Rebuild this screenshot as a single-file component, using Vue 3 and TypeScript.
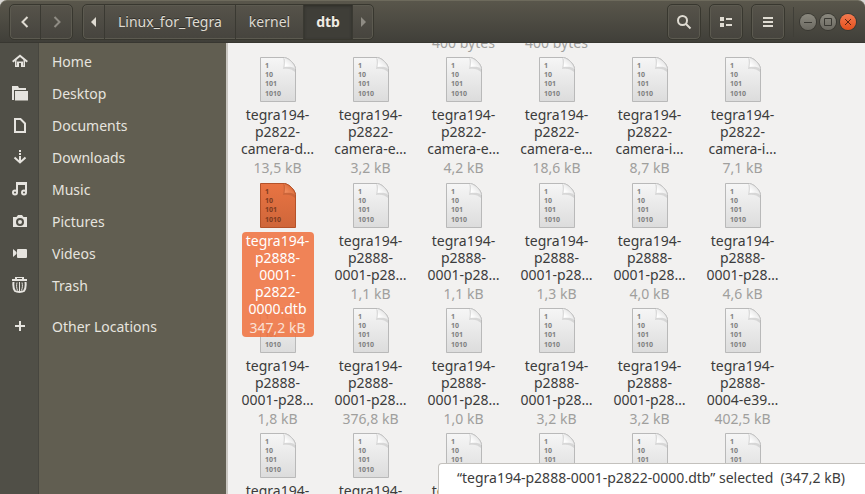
<script setup lang="ts">
interface FileEntry {
  lines: string[]
  size: string
  selected?: boolean
}

interface Place {
  id: string
  label: string
}

const places: Place[] = [
  { id: 'home', label: 'Home' },
  { id: 'desktop', label: 'Desktop' },
  { id: 'documents', label: 'Documents' },
  { id: 'downloads', label: 'Downloads' },
  { id: 'music', label: 'Music' },
  { id: 'pictures', label: 'Pictures' },
  { id: 'videos', label: 'Videos' },
  { id: 'trash', label: 'Trash' },
  { id: 'other', label: 'Other Locations' },
]

const file = (second: string, third: string, size: string): FileEntry => ({
  lines: ['tegra194-', second, third],
  size,
})

// Captions of the row that is scrolled almost out of view.
const scrolledSizes = ['', '', '400 bytes', '400 bytes', '', '']

const files: FileEntry[] = [
  file('p2822-', 'camera-d…', '13,5 kB'),
  file('p2822-', 'camera-e…', '3,2 kB'),
  file('p2822-', 'camera-e…', '4,2 kB'),
  file('p2822-', 'camera-e…', '18,6 kB'),
  file('p2822-', 'camera-i…', '8,7 kB'),
  file('p2822-', 'camera-i…', '7,1 kB'),
  {
    lines: ['tegra194-', 'p2888-', '0001-', 'p2822-', '0000.dtb'],
    size: '347,2 kB',
    selected: true,
  },
  file('p2888-', '0001-p28…', '1,1 kB'),
  file('p2888-', '0001-p28…', '1,1 kB'),
  file('p2888-', '0001-p28…', '1,3 kB'),
  file('p2888-', '0001-p28…', '4,0 kB'),
  file('p2888-', '0001-p28…', '4,6 kB'),
  file('p2888-', '0001-p28…', '1,8 kB'),
  file('p2888-', '0001-p28…', '376,8 kB'),
  file('p2888-', '0001-p28…', '1,0 kB'),
  file('p2888-', '0001-p28…', '3,2 kB'),
  file('p2888-', '0001-p28…', '3,2 kB'),
  file('p2888-', '0004-e39…', '402,5 kB'),
  ...Array.from({ length: 6 }, () => ({ lines: ['tegra194-'], size: '' })),
]
</script>

<template>
  <div class="window">
    <header class="titlebar">
      <div class="group nav">
        <button type="button" class="back" aria-label="Back">
          <svg width="16" height="16" viewBox="0 0 16 16"><path d="M10.5 3 5.500 8l5 5" class="chevron" /></svg>
        </button>
        <button type="button" class="forward" aria-label="Forward" disabled>
          <svg width="16" height="16" viewBox="0 0 16 16"><path d="m5.500 3 5 5-5 5" class="chevron" /></svg>
        </button>
      </div>
      <nav class="group path" aria-label="Path">
        <button type="button" class="edge" aria-label="Scroll path left">
          <svg width="16" height="16" viewBox="0 0 16 16"><path d="M10 3v10L5 8z" /></svg>
        </button>
        <button type="button" class="crumb">Linux_for_Tegra</button>
        <button type="button" class="crumb">kernel</button>
        <button type="button" class="crumb current" aria-current="page">dtb</button>
        <button type="button" class="edge" aria-label="Scroll path right" disabled>
          <svg width="16" height="16" viewBox="0 0 16 16"><path d="M6 3v10L11 8z" /></svg>
        </button>
      </nav>
      <div class="tools">
        <button type="button" class="tool" aria-label="Search">
          <svg width="16" height="16" viewBox="0 0 16 16">
            <circle cx="6.500" cy="6.500" r="4.500" class="lens" />
            <path d="m10 10 4.500 4.500" class="handle" />
          </svg>
        </button>
        <button type="button" class="tool" aria-label="List view">
          <svg width="16" height="16" viewBox="0 0 16 16">
            <path d="M2 3h4v4H2zM8 4h6v2H8zM2 9h4v4H2zM8 10h6v2H8z" />
          </svg>
        </button>
        <button type="button" class="tool" aria-label="Menu">
          <svg width="16" height="16" viewBox="0 0 16 16">
            <path d="M3 3h10v2H3zM3 7h10v2H3zM3 11h10v2H3z" />
          </svg>
        </button>
      </div>
      <div class="controls">
        <button type="button" aria-label="Minimize">
          <svg width="16" height="16" viewBox="0 0 16 16"><path d="M4 8.500h8" /></svg>
        </button>
        <button type="button" aria-label="Maximize">
          <svg width="16" height="16" viewBox="0 0 16 16"><path d="M4.500 4.500h7v7h-7z" /></svg>
        </button>
        <button type="button" class="close" aria-label="Close">
          <svg width="16" height="16" viewBox="0 0 16 16"><path d="m5 5 6 6m0-6-6 6" /></svg>
        </button>
      </div>
    </header>

    <div class="body">
      <aside class="sidebar">
        <ul>
          <li v-for="place in places" :key="place.id" :class="{ separated: place.id === 'other' }">
            <a href="#">
              <span class="place-icon">
                <svg width="16" height="16" viewBox="0 0 16 16" aria-hidden="true">
                  <g v-if="place.id === 'home'">
                    <path d="m.7 8.700 7.300-6 7.300 6" class="line" />
                    <path d="M3 7.500V14h4v-4h2v4h4V7.500L11.500 6v6.500H11V8.500H5v4h-.5V6z" />
                  </g>
                  <g v-else-if="place.id === 'desktop'">
                    <path d="M0 1h6l1 2h7v2H2v10H0z" />
                    <path d="M3 6h13v9.500H3z" />
                  </g>
                  <path v-else-if="place.id === 'documents'" d="M3 2h5.500L13 6.500V15H3z" class="line" />
                  <g v-else-if="place.id === 'downloads'">
                    <path d="M7 1h2v2H7zM7 4h2v2H7zM7 7h2v5H7z" />
                    <path d="m2.500 8.500 5.500 5 5.500-5" class="line" />
                  </g>
                  <g v-else-if="place.id === 'music'">
                    <circle cx="3" cy="11.500" r="2" class="line" />
                    <circle cx="12" cy="11.500" r="2" class="line" />
                    <path d="M5 11.500V2h9v9.500M5 3h9" class="line" />
                  </g>
                  <path
                    v-else-if="place.id === 'pictures'"
                    fill-rule="evenodd"
                    d="M1 4h3.500L6 2h4l1.500 2H15v10H1zM8 5a4 4 0 1 0 0 8 4 4 0 0 0 0-8zm0 2a2 2 0 1 1 0 4 2 2 0 0 1 0-4z"
                  />
                  <path
                    v-else-if="place.id === 'videos'"
                    d="M1 4v8l3.500-3V7zM6 4h8a1 1 0 0 1 1 1v7a1 1 0 0 1-1 1H6a1 1 0 0 1-1-1V5a1 1 0 0 1 1-1z"
                  />
                  <g v-else-if="place.id === 'trash'">
                    <path fill-rule="evenodd" d="M3 0h9v2h3v2H0V2h3zm2 1v1h5V1z" />
                    <path d="M1.500 5c-.5 4 0 7 1.500 9 2 1.300 7 1.300 9 0 1.500-2 2-5 1.500-9" class="line" />
                    <path d="M5 5.500c-.7 3-.5 5 .5 8M7.500 5v9M10 5.500c.7 3 .5 5-.5 8" class="thin" />
                  </g>
                  <path v-else d="M7 3h2v4h4v2H9v4H7V9H3V7h4z" />
                </svg>
              </span>
              <span class="place-label">{{ place.label }}</span>
            </a>
          </li>
        </ul>
      </aside>

      <main class="files">
        <div class="row scrolled">
          <span v-for="(size, i) in scrolledSizes" :key="i" class="size">{{ size }}</span>
        </div>
        <div class="row grid">
          <div v-for="(entry, i) in files" :key="i" class="file" :class="{ selected: entry.selected }">
            <svg class="doc" width="36" height="45" viewBox="0 0 36 45" aria-hidden="true">
              <defs>
                <linearGradient :id="'page' + i" x1="0" y1="0" x2="0" y2="1">
                  <stop offset="0" :stop-color="entry.selected ? '#e97443' : '#f6f6f6'" />
                  <stop offset="1" :stop-color="entry.selected ? '#cf663a' : '#dcdcdc'" />
                </linearGradient>
                <linearGradient :id="'fold' + i" x1="0" y1="1" x2="1" y2="0">
                  <stop offset="0.2" :stop-color="entry.selected ? '#f08a5c' : '#ffffff'" />
                  <stop offset="0.8" :stop-color="entry.selected ? '#d4622f' : '#dedede'" />
                </linearGradient>
              </defs>
              <path class="page" :fill="`url(#page${i})`" d="M.5.5h24c5 1 10 6 11 11v33H.5z" />
              <path class="shade" d="M23 1c1 3 1 6 0 11 5-1 9 0 12 3v-3C33 6 29 3 23 1z" />
              <path class="fold" :fill="`url(#fold${i})`" d="M24.500.5c1 3 .5 6 0 9.500 4-.5 8-.5 11 1.500-1-5-6-10-11-11z" />
              <path class="rim" d="M24.500.5c5 1 10 6 11 11" />
              <g class="digits">
                <text x="5" y="11">1</text>
                <text x="5" y="20">10</text>
                <text x="5" y="29">101</text>
                <text x="5" y="39">1010</text>
              </g>
            </svg>
            <div class="caption">
              <div class="name">
                <div v-for="(line, n) in entry.lines" :key="n">{{ line }}</div>
              </div>
              <div class="size">{{ entry.size }}</div>
            </div>
          </div>
        </div>
        <div class="status" role="status">“tegra194-p2888-0001-p2822-0000.dtb” selected&nbsp; (347,2 kB)</div>
      </main>
    </div>
  </div>
</template>

<style>
body {
  margin: 0;
  background: #d8d6d3;
}
</style>

<style scoped>
.window {
  display: flex;
  flex-direction: column;
  height: 100vh;
  overflow: hidden;
  font-family: "Noto Sans", "Open Sans", sans-serif;
  font-size: 14px;
  color: #3c3c3c;
}

button {
  margin: 0;
  padding: 0;
  border: 0;
  background: none;
  color: #dfdbd2;
  font: inherit;
  display: flex;
  align-items: center;
  justify-content: center;
}

svg {
  display: block;
  flex: none;
  fill: currentColor;
}

.titlebar {
  display: flex;
  align-items: center;
  box-sizing: border-box;
  height: 43px;
  flex: none;
  padding: 0 9px;
  border-top: 1px solid #6d6a5c;
  border-bottom: 1px solid #383731;
  border-radius: 7px 7px 0 0;
  background: linear-gradient(#59564b, #403f39);
}

.group,
.tool {
  box-sizing: border-box;
  height: 36px;
  border: 1px solid #38372f;
  border-radius: 5px;
  background: linear-gradient(#56534a, #46443e);
  box-shadow: inset 0 0 0 1px #5c5a50;
}

.group {
  display: flex;
  overflow: hidden;
}

.group button + button {
  border-left: 1px solid #3a3932;
}

.back {
  width: 30px;
}

.forward {
  width: 32px;
}

.nav {
  margin-right: 9px;
}

.chevron {
  fill: none;
  stroke: currentColor;
  stroke-width: 2;
}

button:disabled {
  color: #8f8c84;
}

.edge {
  width: 21px;
}

.crumb {
  padding: 0 13px;
  text-shadow: 0 -1px #2f2e29;
}

.current {
  padding: 0 12px;
  background: #3f3e38;
  box-shadow: inset 0 1px 3px #2d2c27;
  font-weight: 700;
  color: #f0ece4;
}

.tools {
  display: flex;
  gap: 8px;
  margin-left: auto;
}

.tool {
  width: 34px;
}

.lens,
.handle {
  fill: none;
  stroke: currentColor;
  stroke-width: 2;
}

.controls {
  display: flex;
  align-items: center;
  gap: 4px;
  height: 30px;
  margin-left: 8px;
  padding-left: 6px;
  border-left: 1px solid #403f38;
}

.controls button {
  width: 16px;
  height: 16px;
  border-radius: 50%;
  background: linear-gradient(#8b897f, #6c6a62);
  box-shadow: 0 0 0 1px #3a3933;
  color: #3a3933;
}

.controls .close {
  background: linear-gradient(#f47a50, #e3501d);
  color: #5b2410;
}

.controls path {
  fill: none;
  stroke: currentColor;
}

.body {
  display: flex;
  flex: 1;
  min-height: 0;
}

.sidebar {
  box-sizing: border-box;
  width: 228px;
  flex: none;
  border-right: 2px solid #c9c6c1;
  background: linear-gradient(to right, #504f47 38px, #47463f 38px, #47463f 39px, #615e51 39px);
}

.sidebar ul {
  margin: 0;
  padding: 2px 0;
  list-style: none;
}

.separated {
  margin-top: 9px;
}

.sidebar a {
  display: flex;
  align-items: center;
  height: 32px;
  color: #e6e4df;
  text-decoration: none;
}

.place-icon {
  width: 40px;
  display: flex;
  justify-content: center;
}

.place-label {
  padding-left: 12px;
}

.line {
  fill: none;
  stroke: currentColor;
  stroke-width: 2;
}

.thin {
  fill: none;
  stroke: currentColor;
}

.files {
  position: relative;
  flex: 1;
  min-width: 0;
  overflow: hidden;
  background: #f2f1f0;
}

.row {
  display: grid;
  grid-template-columns: repeat(auto-fill, 93px);
  padding-left: 3px;
}

.scrolled {
  height: 14px;
  align-content: end;
}

.scrolled .size {
  margin-bottom: 5px;
}

.grid {
  grid-template-rows: 126px;
  grid-auto-rows: 125px;
}

.file {
  display: flex;
  flex-direction: column;
  align-items: center;
}

.doc {
  overflow: visible;
}

.page {
  stroke: #b9b9b9;
}

.rim {
  fill: none;
  stroke: #c4c4c4;
}

.shade {
  fill: #000000;
  opacity: 0.1;
}

.digits {
  fill: #808080;
  font-family: "Noto Sans", sans-serif;
  font-size: 7px;
  font-weight: 700;
}

.caption {
  box-sizing: border-box;
  width: 72px;
  margin-top: 4px;
  display: flex;
  flex-direction: column;
  align-items: center;
  border-radius: 4px;
  white-space: nowrap;
}

.name {
  line-height: 17px;
  text-align: center;
}

.size {
  margin-top: 2px;
  line-height: 18px;
  text-align: center;
  color: #a09f9d;
}

.selected .caption {
  position: relative;
  background: rgba(240, 119, 70, 0.9);
  color: #ffffff;
}

.selected .size {
  color: #fbe0d5;
}

.selected .page,
.selected .rim {
  stroke: #b4522a;
}

.selected .digits {
  fill: #7d3a1f;
}

.status {
  position: absolute;
  right: 0;
  bottom: 0;
  padding: 4px 20px 6px 18px;
  border: 1px solid #c3c1bd;
  border-width: 1px 0 0 1px;
  border-radius: 4px 0 0 0;
  background: #ffffff;
  line-height: 20px;
  white-space: pre;
}
</style>
